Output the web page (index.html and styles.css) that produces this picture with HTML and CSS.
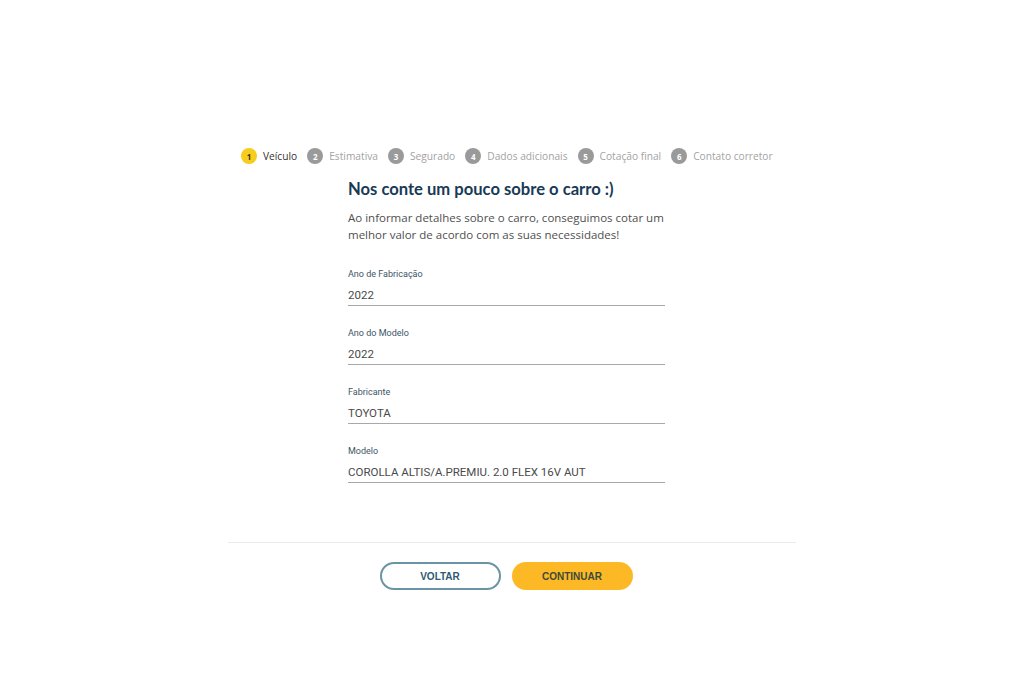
FILE: index.html
```html
<!DOCTYPE html>
<html lang="pt-BR">
<head>
    <meta charset="UTF-8">
    <meta name="viewport" content="width=device-width, initial-scale=1.0">
    <title>Cotação - Veículo</title>
    <link rel="stylesheet" href="styles.css">
</head>
<body>
    <div class="wrapper">
        <ul class="steps">
            <li class="step active"><span class="num">1</span>Veículo</li>
            <li class="step"><span class="num">2</span>Estimativa</li>
            <li class="step"><span class="num">3</span>Segurado</li>
            <li class="step"><span class="num">4</span>Dados adicionais</li>
            <li class="step"><span class="num">5</span>Cotação final</li>
            <li class="step"><span class="num">6</span>Contato corretor</li>
        </ul>

        <div class="form">
            <h1>Nos conte um pouco sobre o carro :)</h1>
            <p class="intro">Ao informar detalhes sobre o carro, conseguimos cotar um melhor valor de acordo com as suas necessidades!</p>

            <div class="field">
                <label>Ano de Fabricação</label>
                <div class="value">2022</div>
            </div>
            <div class="field">
                <label>Ano do Modelo</label>
                <div class="value">2022</div>
            </div>
            <div class="field">
                <label>Fabricante</label>
                <div class="value">TOYOTA</div>
            </div>
            <div class="field">
                <label>Modelo</label>
                <div class="value">COROLLA ALTIS/A.PREMIU. 2.0 FLEX 16V AUT</div>
            </div>
        </div>

        <div class="actions">
            <button class="btn btn-outline">VOLTAR</button>
            <button class="btn btn-primary">CONTINUAR</button>
        </div>
    </div>
</body>
</html>
```

FILE: styles.css
```css
body {
    margin: 0;
    background: #fff;
    font-family: "Open Sans", Arial, sans-serif;
}
.wrapper {
    width: 568px;
    margin: 0 auto;
    padding-top: 147px;
}
.steps {
    list-style: none;
    margin: 0;
    padding: 0 0 0 13px;
    display: flex;
    gap: 10px;
}
.step {
    display: flex;
    align-items: center;
    gap: 6px;
    font-size: 10.2px;
    color: #a3a3a3;
    height: 18px;
}
.step .num {
    width: 16px;
    height: 16px;
    border-radius: 50%;
    background: #9a9a9a;
    color: #fff;
    font-size: 8px;
    font-weight: 700;
    display: flex;
    align-items: center;
    justify-content: center;
}
.step.active {
    color: #333;
}
.step.active .num {
    background: #f7cc1a;
    color: #333;
}
.form {
    width: 317px;
    margin-top: 13px;
    padding: 0 131px 37px 120px;
    border-bottom: 1px solid #ececec;
}
h1 {
    margin: 0;
    font-family: Lato, "Open Sans", sans-serif;
    font-size: 16.6px;
    font-weight: 700;
    color: #183a55;
    line-height: 23px;
}
.intro {
    margin: 8px 0 26px;
    font-size: 11.5px;
    line-height: 17px;
    color: #4f4f4f;
}
.field {
    margin-bottom: 22px;
}
.field label {
    display: block;
    font-family: Roboto, Arial, sans-serif;
    font-size: 9px;
    color: #3d5566;
    margin-bottom: 9px;
}
.field .value {
    font-family: Roboto, Arial, sans-serif;
    font-size: 11.5px;
    color: #4a4a4a;
    padding-bottom: 3px;
    border-bottom: 1px solid #a8a8a8;
}
.actions {
    display: flex;
    justify-content: center;
    gap: 11px;
    padding: 19px 12px 0 0;
}
.btn {
    width: 121px;
    height: 28px;
    border-radius: 14px;
    font-family: "Liberation Sans", Arial, sans-serif;
    font-size: 10px;
    font-weight: 700;
    cursor: pointer;
}
.btn-outline {
    background: #fff;
    border: 2px solid #6a93a5;
    color: #2f5a72;
}
.btn-primary {
    background: #fdb925;
    border: none;
    color: #3c4a3a;
}
```
